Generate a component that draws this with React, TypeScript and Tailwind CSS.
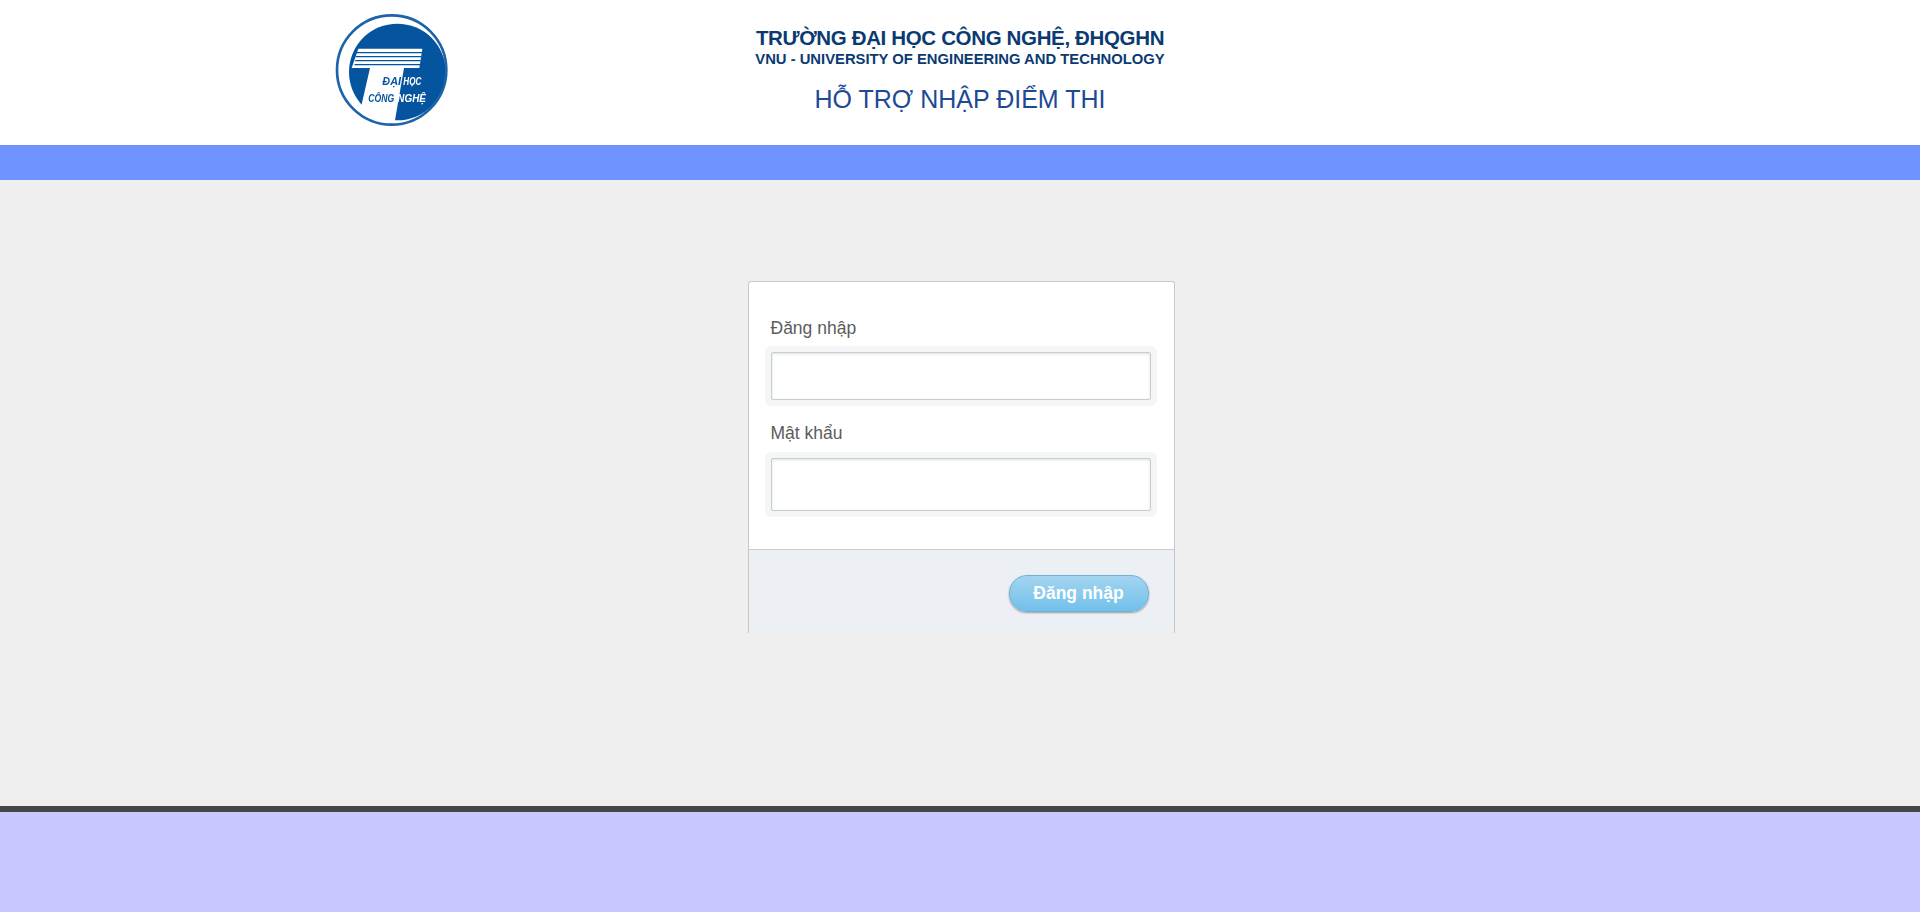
export default function App() {
  const font = "font-['Liberation_Sans',Arial,sans-serif]";
  return (
    <div className={`flex h-[912px] flex-col overflow-hidden bg-[#efefef] ${font}`}>
      <header className="flex h-[145px] shrink-0 items-start bg-white pl-[320px]">
        <svg viewBox="0 0 450 420" className="mt-[2px] h-[140px] w-[150px] shrink-0 blur-[0.4px]">
          <circle cx="232" cy="210" r="145" fill="#05549f" />
          <polygon points="115,140 307,140 298,198 95,198" fill="white" />
          <polygon points="150,198 252,198 222,372 110,372 130,285" fill="white" />
          <path d="M110 150H306V154H109ZM108 162H304V166H107ZM106 174H302V178H105ZM104 186H300V190H103Z" fill="#05549f" />
          <circle cx="215" cy="204" r="164" fill="none" stroke="#1d63a8" strokeWidth="8" />
          <text x="187" y="248" fontSize="30" fontWeight="700" fontStyle="italic" textLength="56" lengthAdjust="spacingAndGlyphs" fill="#05549f" fontFamily="Liberation Sans">ĐẠI</text>
          <text x="250" y="248" fontSize="30" fontWeight="700" fontStyle="italic" textLength="54" lengthAdjust="spacingAndGlyphs" fill="white" fontFamily="Liberation Sans">HỌC</text>
          <text x="145" y="300" fontSize="30" fontWeight="700" fontStyle="italic" textLength="78" lengthAdjust="spacingAndGlyphs" fill="#05549f" fontFamily="Liberation Sans">CÔNG</text>
          <text x="232" y="300" fontSize="30" fontWeight="700" fontStyle="italic" textLength="86" lengthAdjust="spacingAndGlyphs" fill="white" fontFamily="Liberation Sans">NGHỆ</text>
        </svg>
        <div className="flex w-[980px] flex-col items-center">
          <div className="mt-[26px] text-[20.5px] font-bold leading-[24px] tracking-[-0.35px] text-[#0b3a72]">TRƯỜNG ĐẠI HỌC CÔNG NGHỆ, ĐHQGHN</div>
          <div className="mt-[1px] text-[14.8px] font-bold leading-[16px] text-[#0b3a72]">VNU - UNIVERSITY OF ENGINEERING AND TECHNOLOGY</div>
          <div className="mt-[17px] text-[25px] leading-[30px] text-[#1c4a94]">HỖ TRỢ NHẬP ĐIỂM THI</div>
        </div>
      </header>
      <div className="h-[35px] shrink-0 bg-[#7094ff]" />
      <main className="flex flex-1 justify-center pl-[2px] pt-[101px]">
        <div className="h-[352px] w-[427px] overflow-hidden rounded-t-[3px] border-x border-t border-[#c8c8c8] bg-white">
          <div className="h-[268px] border-b border-[#cccccc] pl-[16px] pr-[17px] pt-[34px]">
            <label className="block pl-[6px] text-[17.5px] leading-[24px] text-[#5c5c5c]">Đăng nhập</label>
            <div className="mt-[6px] h-[60px] rounded-[6px] bg-[#f4f5f6] p-[6px]">
              <input className="block h-[48px] w-full rounded-[2px] border border-[#c5cfd2] bg-white shadow-[inset_0_1px_3px_rgba(0,0,0,0.12)] outline-none" />
            </div>
            <label className="mt-[15px] block pl-[6px] text-[17.5px] leading-[24px] text-[#5c5c5c]">Mật khẩu</label>
            <div className="mt-[7px] h-[65px] rounded-[6px] bg-[#f4f5f6] p-[6px]">
              <input type="password" className="block h-[53px] w-full rounded-[2px] border border-[#c5cfd2] bg-white shadow-[inset_0_1px_3px_rgba(0,0,0,0.12)] outline-none" />
            </div>
          </div>
          <div className="flex h-[84px] items-start justify-end bg-[#ecf0f4] pr-[25px] pt-[25px]">
            <button className="h-[37px] w-[140px] rounded-[18px] border border-[#72b2d6] bg-gradient-to-b from-[#a3d4f0] to-[#70c0ea] text-[17.5px] font-bold text-white shadow-[0_1px_2px_rgba(0,0,0,0.35)]">Đăng nhập</button>
          </div>
        </div>
      </main>
      <footer className="h-[106px] shrink-0 border-t-[6px] border-[#464646] bg-[#c8c8ff]" />
    </div>
  );
}
